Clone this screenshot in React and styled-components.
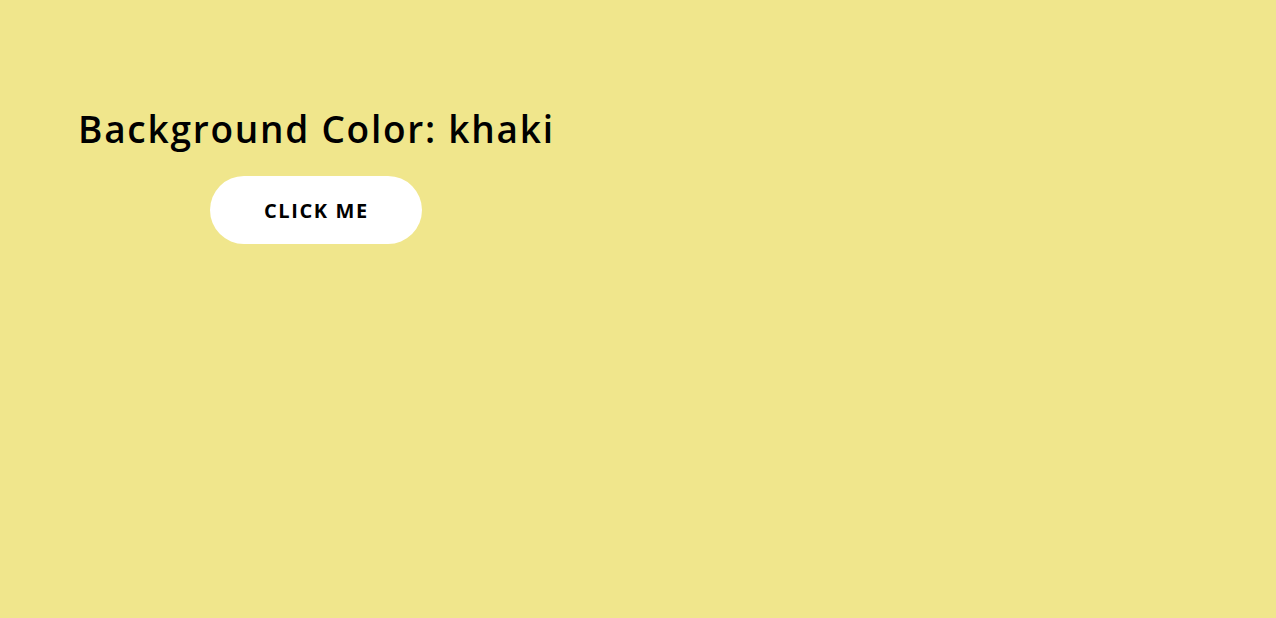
import React from 'react';
import styled, { createGlobalStyle } from 'styled-components';

const GlobalStyle = createGlobalStyle`
  html, body {
    margin: 0;
    padding: 0;
    background-color: khaki;
    font-family: 'Open Sans', 'Liberation Sans', sans-serif;
  }
`;

function App() {
  return (
    <>
      <GlobalStyle />
      <Page>
        <Panel>
          <Title>Background Color: khaki</Title>
          <ClickButton type="button">CLICK ME</ClickButton>
        </Panel>
      </Page>
    </>
  );
}

const Page = styled.div`
  min-height: 100vh;
  background-color: khaki;
  padding: 104px 0 0 78px;
  box-sizing: border-box;
`;

const Panel = styled.div`
  display: inline-flex;
  flex-direction: column;
  align-items: center;
  gap: 22px;
`;

const Title = styled.h1`
  margin: 0;
  font-size: 37px;
  font-weight: 600;
  letter-spacing: 1.75px;
  line-height: 50px;
  color: #000;
`;

const ClickButton = styled.button`
  width: 212px;
  height: 68px;
  border: none;
  border-radius: 34px;
  background-color: #fff;
  color: #000;
  font-family: inherit;
  font-size: 20px;
  font-weight: 700;
  letter-spacing: 1.6px;
  cursor: pointer;
`;

export default App;
